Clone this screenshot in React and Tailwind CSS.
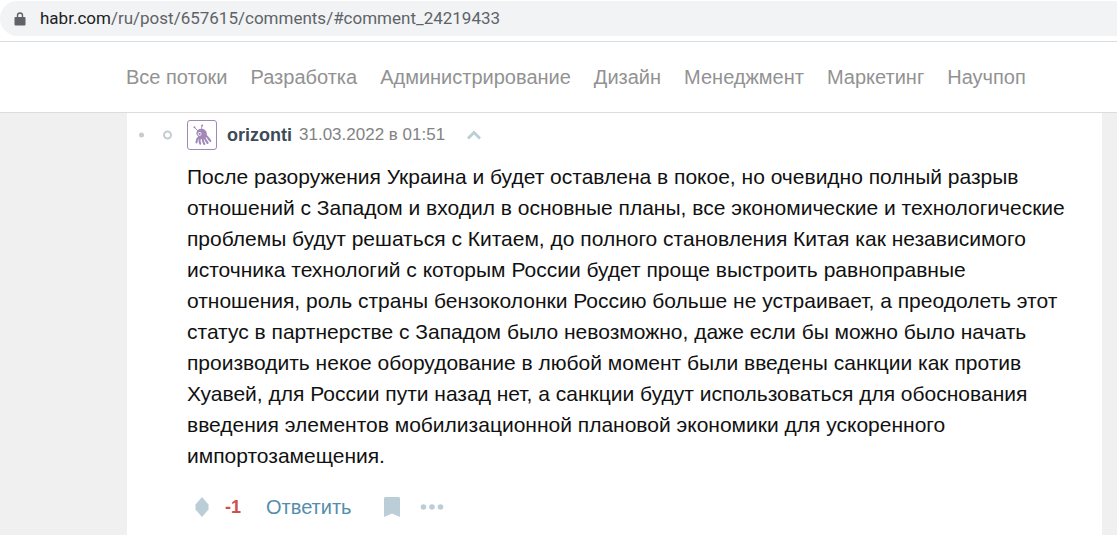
const FLOWS = [
  "Все потоки",
  "Разработка",
  "Администрирование",
  "Дизайн",
  "Менеджмент",
  "Маркетинг",
  "Научпоп",
];

const comment = {
  author: "orizonti",
  date: "31.03.2022 в 01:51",
  score: -1,
  text: "После разоружения Украина и будет оставлена в покое, но очевидно полный разрыв отношений с Западом и входил в основные планы, все экономические и технологические проблемы будут решаться с Китаем, до полного становления Китая как независимого источника технологий с которым России будет проще выстроить равноправные отношения, роль страны бензоколонки Россию больше не устраивает, а преодолеть этот статус в партнерстве с Западом было невозможно, даже если бы можно было начать производить некое оборудование в любой момент были введены санкции как против Хуавей, для России пути назад нет, а санкции будут использоваться для обоснования введения элементов мобилизационной плановой экономики для ускоренного импортозамещения.",
};

function LockIcon() {
  return (
    <svg className="h-4 w-3 shrink-0" viewBox="0 0 12 16" aria-hidden="true">
      <path d="M3.500 6.500V4.500a2.500 2.500 0 0 1 5 0v2" fill="none" stroke="#5f6368" strokeWidth="1.400" />
      <rect x="0.500" y="6" width="11" height="8.500" rx="1" fill="#5f6368" />
    </svg>
  );
}

function Avatar() {
  return (
    <svg className="h-[30px] w-[30px] shrink-0" viewBox="0 0 30 30" aria-hidden="true">
      <rect x="0.5" y="0.5" width="29" height="29" rx="2.500" fill="#fff" stroke="#a188b8" />
      <g fill="none" stroke="#a188b8" strokeLinecap="round" strokeLinejoin="round">
        <path d="M10.500 10.500 7.700 7.700M14.500 9.500l.5-4" strokeWidth="0.900" />
        <path
          d="M11.500 17.500c-2 1.500-2 3-2 5M13 17.500c-.8 2.500-.5 4.500.2 6.200M15.500 17c0 2.500.3 5 1.800 7M17 16c.8 2.800 2 5 3.600 7M18 14.500c1.800 1.500 3.500 4 5.300 6.500"
          strokeWidth="2.100"
        />
      </g>
      <path d="M9.500 12.500c.3-2.500 2.800-4 5.500-3.700 3 .3 4.800 2.400 4.800 4.900 0 2.800-2 5.300-5 5.300-2 0-3.300-.5-4-1.500.8-.6.600-1.300-.2-1.800-1-.6-1.300-1.700-1.100-3.200z" fill="#a188b8" />
      <circle cx="7.500" cy="7.300" r="1" fill="#a188b8" />
      <circle cx="15.200" cy="5.500" r="1" fill="#a188b8" />
      <circle cx="12.600" cy="13.800" r="1.900" fill="#fff" />
      <circle cx="12.600" cy="13.900" r="1.100" fill="#a188b8" />
    </svg>
  );
}

function AddressBar() {
  return (
    <div className="border-b border-[#dadce0] pt-px pb-[5px]">
      <div className="flex h-[35px] items-center gap-[14px] rounded-l-full bg-[#f1f3f4] pl-[14px] font-[Roboto,'Open_Sans',sans-serif] text-[17px]">
        <LockIcon />
        <p className="whitespace-nowrap text-[#5f6368]">
          <span className="text-[#202124]">habr.com</span>/ru/post/657615/comments/#comment_24219433
        </p>
      </div>
    </div>
  );
}

function CommentHeader() {
  return (
    <header className="flex h-[30px] items-center">
      <svg className="h-3 w-[60px] shrink-0" viewBox="0 0 60 12" aria-hidden="true">
        <circle cx="14.500" cy="6" r="2.500" fill="#c6cdd1" />
        <circle cx="40.500" cy="6" r="3.500" fill="none" stroke="#c6cdd1" strokeWidth="2" />
      </svg>
      <Avatar />
      <a href="#orizonti" className="ml-[10px] text-[18px] font-bold text-[#3c4b57]">
        {comment.author}
      </a>
      <time dateTime="2022-03-31T01:51" className="ml-[7px] text-[17px] text-[#838383]">
        {comment.date}
      </time>
      <button type="button" aria-label="К родительскому комментарию" className="ml-[22px]">
        <svg className="h-[10px] w-[14px]" viewBox="0 0 14 10">
          <path d="m1 8.500 6-6 6 6" fill="none" stroke="#bbcdd6" strokeWidth="2.800" />
        </svg>
      </button>
    </header>
  );
}

function CommentFooter() {
  return (
    <footer className="flex h-[30px] items-center">
      <button type="button" aria-label="Голосовать" className="ml-2">
        <svg className="h-5 w-[14px]" viewBox="0 0 14 20">
          <path d="M7 0 13.500 7.500v5L7 20 .5 12.500v-5z" fill="#bbcdd6" />
        </svg>
      </button>
      <span className="ml-4 text-[18px] font-bold text-[#d04e4e]">{comment.score}</span>
      <button type="button" className="ml-[25px] text-[20px] text-[#548eaa]">
        Ответить
      </button>
      <button type="button" aria-label="В закладки" className="ml-8">
        <svg className="h-5 w-4" viewBox="0 0 16 20">
          <path d="M1.500 0h13A1.500 1.500 0 0 1 16 1.500V20l-8-3.500L0 20V1.500A1.500 1.500 0 0 1 1.500 0z" fill="#bbcdd6" />
        </svg>
      </button>
      <button type="button" aria-label="Ещё" className="ml-5">
        <svg className="h-[6px] w-6" viewBox="0 0 24 6" fill="#bbcdd6">
          <circle cx="3.500" cy="3" r="2.800" />
          <circle cx="12" cy="3" r="2.800" />
          <circle cx="20.500" cy="3" r="2.800" />
        </svg>
      </button>
    </footer>
  );
}

export default function App() {
  return (
    <div className="flex min-h-screen flex-col bg-white font-['Liberation_Sans',Arial,sans-serif]">
      <AddressBar />
      <nav className="flex h-[71px] items-center gap-[23px] border-b border-[#dcdcdc] pl-[126px] text-[20px] whitespace-nowrap text-[#929292]">
        {FLOWS.map((flow) => (
          <a key={flow} href="#flow">
            {flow}
          </a>
        ))}
      </nav>
      <main className="flex grow bg-[#f0f0f0] pr-[15px] pl-[127px]">
        <article className="grow bg-white pt-[7px]">
          <CommentHeader />
          <div className="pr-5 pl-[60px]">
            <p className="mt-[11px] mb-[21px] text-[21px] leading-[31px] text-[#111]">{comment.text}</p>
            <CommentFooter />
          </div>
        </article>
      </main>
    </div>
  );
}
